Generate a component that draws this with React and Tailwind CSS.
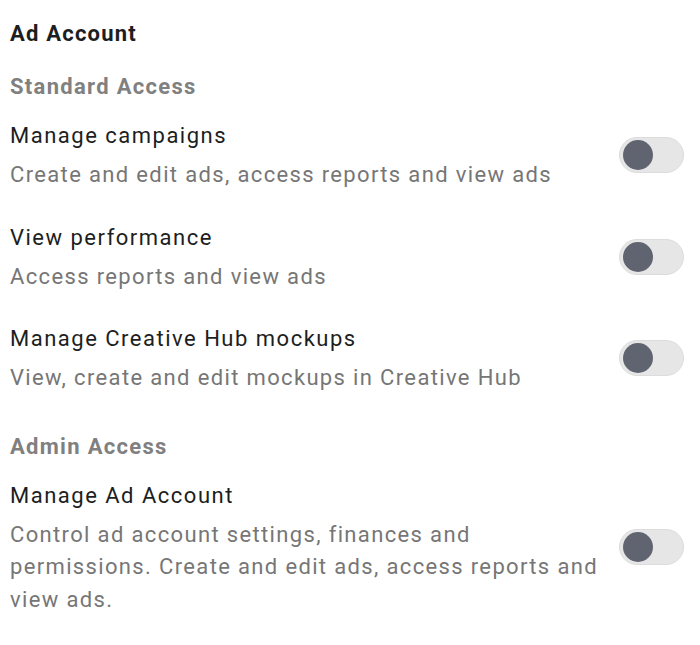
import { useState } from 'react'

const standard = [
  {
    title: 'Manage campaigns',
    desc: 'Create and edit ads, access reports and view ads',
  },
  {
    title: 'View performance',
    desc: 'Access reports and view ads',
  },
  {
    title: 'Manage Creative Hub mockups',
    desc: 'View, create and edit mockups in Creative Hub',
  },
]

const admin = [
  {
    title: 'Manage Ad Account',
    desc: 'Control ad account settings, finances and permissions. Create and edit ads, access reports and view ads.',
  },
]

function Toggle({ on, onClick }) {
  return (
    <button
      onClick={onClick}
      className={`relative shrink-0 w-[65px] h-[36px] rounded-full border border-[#dcdcdc] ${on ? 'bg-[#cfd8ea]' : 'bg-[#e6e6e6]'}`}
    >
      <span
        className={`absolute top-[2px] w-[30px] h-[30px] rounded-full bg-[#5f6470] ${on ? 'left-[30px]' : 'left-[3px]'}`}
      />
    </button>
  )
}

function Item({ item, on, onToggle }) {
  return (
    <div className="flex items-center gap-[14px]">
      <div className="flex-1">
        <div className="text-[22px] leading-[33px] tracking-[1.5px] text-[#1c1e21]">{item.title}</div>
        <div className="mt-[7px] text-[22px] leading-[32.5px] tracking-[1.35px] text-[#767676]">{item.desc}</div>
      </div>
      <Toggle on={on} onClick={onToggle} />
    </div>
  )
}

export default function App() {
  const [state, setState] = useState({})
  const flip = (k) => setState((s) => ({ ...s, [k]: !s[k] }))

  return (
    <div className="min-h-screen bg-white pt-[17px] pl-[10px] pr-[16px]" style={{ fontFamily: 'Roboto, "Noto Sans", sans-serif' }}>
      <h2 className="text-[22px] leading-[33px] font-bold tracking-[1.2px] text-[#1c1e21]">Ad Account</h2>

      {/* Standard */}
      <h3 className="mt-[20px] text-[22px] leading-[33px] font-bold tracking-[1.3px] text-[#808080]">Standard Access</h3>
      <div className="mt-[16px] flex flex-col gap-[29px]">
        {standard.map((it) => (
          <Item key={it.title} item={it} on={state[it.title]} onToggle={() => flip(it.title)} />
        ))}
      </div>

      {/* Admin */}
      <h3 className="mt-[35px] text-[22px] leading-[33px] font-bold tracking-[1.3px] text-[#808080]">Admin Access</h3>
      <div className="mt-[16px] flex flex-col gap-[29px]">
        {admin.map((it) => (
          <Item key={it.title} item={it} on={state[it.title]} onToggle={() => flip(it.title)} />
        ))}
      </div>
    </div>
  )
}
